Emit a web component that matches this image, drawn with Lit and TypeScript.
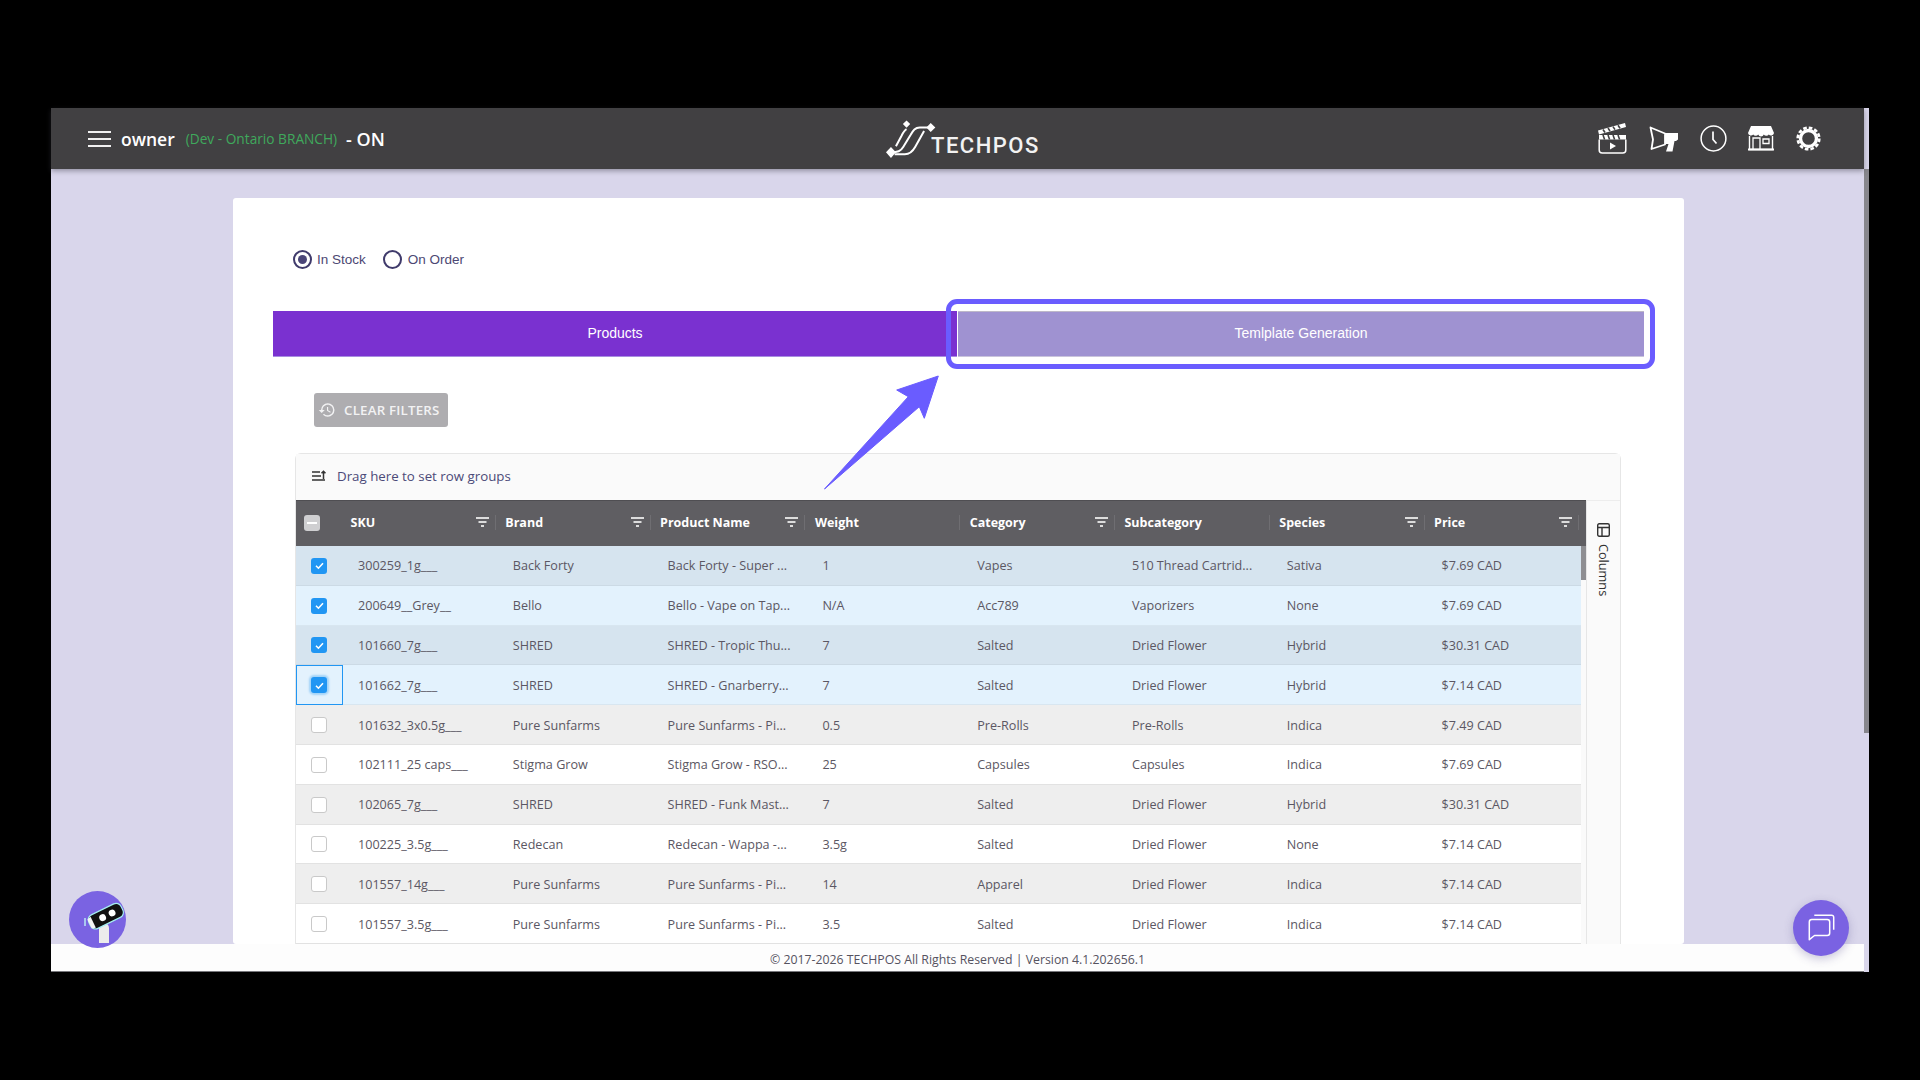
import { LitElement, html, css, svg } from "lit";
import { customElement } from "lit/decorators.js";
import { classMap } from "lit/directives/class-map.js";

const columns = [
  { label: "SKU", filter: true },
  { label: "Brand", filter: true },
  { label: "Product Name", filter: true },
  { label: "Weight", filter: false },
  { label: "Category", filter: true },
  { label: "Subcategory", filter: false },
  { label: "Species", filter: true },
  { label: "Price", filter: true },
];

const rows = [
  ["300259_1g___", "Back Forty", "Back Forty - Super ...", "1", "Vapes", "510 Thread Cartrid...", "Sativa", "$7.69 CAD"],
  ["200649__Grey__", "Bello", "Bello - Vape on Tap...", "N/A", "Acc789", "Vaporizers", "None", "$7.69 CAD"],
  ["101660_7g___", "SHRED", "SHRED - Tropic Thu...", "7", "Salted", "Dried Flower", "Hybrid", "$30.31 CAD"],
  ["101662_7g___", "SHRED", "SHRED - Gnarberry...", "7", "Salted", "Dried Flower", "Hybrid", "$7.14 CAD"],
  ["101632_3x0.5g___", "Pure Sunfarms", "Pure Sunfarms - Pi...", "0.5", "Pre-Rolls", "Pre-Rolls", "Indica", "$7.49 CAD"],
  ["102111_25 caps___", "Stigma Grow", "Stigma Grow - RSO...", "25", "Capsules", "Capsules", "Indica", "$7.69 CAD"],
  ["102065_7g___", "SHRED", "SHRED - Funk Mast...", "7", "Salted", "Dried Flower", "Hybrid", "$30.31 CAD"],
  ["100225_3.5g___", "Redecan", "Redecan - Wappa -...", "3.5g", "Salted", "Dried Flower", "None", "$7.14 CAD"],
  ["101557_14g___", "Pure Sunfarms", "Pure Sunfarms - Pi...", "14", "Apparel", "Dried Flower", "Indica", "$7.14 CAD"],
  ["101557_3.5g___", "Pure Sunfarms", "Pure Sunfarms - Pi...", "3.5", "Salted", "Dried Flower", "Indica", "$7.14 CAD"],
];

const filterIcon = svg`<svg class="filter" width="13" height="10" viewBox="0 0 13 10">
  <path d="M0 1h13M2.5 5h8M5 9h3" stroke="#dcdcdc" stroke-width="2" fill="none"/></svg>`;

const logo = svg`<svg class="logo-mark" width="53" height="40" viewBox="75 40 160 120" fill="none" stroke="#fff" stroke-width="6">
  <path d="M213 65H180C166 65 160 74 152 88L130 124C122 137 114 140 93 140"/>
  <path d="M140 70C134 73 130 80 125 90L108 122"/>
  <path d="M193 76L166 124C158 138 150 146 135 146H104"/>
  <path fill="#fff" stroke="none" d="M140 44l11 11-11 11-11-11zM213 52l14 13-14 14-13-14zM93 124l15 16-15 17-15-17z"/>
</svg>`;

const clapper = svg`<svg width="29" height="31" viewBox="0 0 29 31" fill="none">
  <path d="M0 7.5L27 0l1 4L1 11.5z" fill="#fff"/>
  <path d="M5 6.5l2 3M10 5l2 3M15 3.6l2 3M20 2.2l2 3" stroke="#414042" stroke-width="1.6"/>
  <path d="M1 12h27v4.5H1z" fill="#fff"/>
  <path d="M5 12l1.6 4.5M10 12l1.6 4.5M15 12l1.6 4.5M20 12l1.6 4.5" stroke="#414042" stroke-width="1.6"/>
  <path d="M1.2 16.5V27a3 3 0 0 0 3 3h20.600a3 3 0 0 0 3-3V16.500" stroke="#fff" stroke-width="1.500"/>
  <path d="M12 19.500l6 3.500-6 3.500z" fill="#fff"/>
</svg>`;

const megaphone = svg`<svg width="30" height="26" viewBox="0 0 30 26" fill="none">
  <path d="M2.500 1.500L17 7.500v11L3.500 23 5 13.500z" stroke="#fff" stroke-width="1.800" stroke-linejoin="round"/>
  <path d="M17 7h13v6.500l-2 1.500-1.500 0-2 10.500h-6.500l2.500-7.500H17z" fill="#fff"/>
</svg>`;

const clock = svg`<svg width="27" height="27" viewBox="0 0 27 27" fill="none" stroke="#fff">
  <circle cx="13.500" cy="13.500" r="12.400" stroke-width="1.500"/>
  <path d="M13 6.500v8l3.500 4" stroke-width="1.700"/>
</svg>`;

const store = svg`<svg width="26" height="25" viewBox="0 0 26 25" fill="none">
  <path d="M3 0h20l3 7a3 3 0 0 1-5.200 1.500 3 3 0 0 1-5 0 3 3 0 0 1-5.600 0 3 3 0 0 1-5 0A3 3 0 0 1 0 7z" fill="#fff"/>
  <path d="M1.500 10v13.500h23V10" stroke="#fff" stroke-width="1.400"/>
  <path d="M5 23V12h7v11M15 13h6v4.500h-6z" stroke="#fff" stroke-width="1.300"/>
  <path d="M0 23.500h26" stroke="#fff" stroke-width="2"/>
</svg>`;

const gear = svg`<svg width="25" height="25" viewBox="0 0 25 25" fill="none" stroke="#fff">
  <circle cx="12.500" cy="12.500" r="8" stroke-width="3.400"/>
  <circle cx="12.500" cy="12.500" r="10.800" stroke-width="2.600" stroke-dasharray="3.600 2.050"/>
</svg>`;

const history = svg`<svg width="18" height="18" viewBox="0 0 24 24" fill="#f2f2f3">
  <path d="M13 3a9 9 0 0 0-9 9H1l3.890 3.890.07.140L9 12H6c0-3.870 3.130-7 7-7s7 3.130 7 7-3.130 7-7 7c-1.930 0-3.680-.790-4.940-2.060l-1.420 1.420A8.954 8.954 0 0 0 13 21a9 9 0 0 0 0-18zm-1 5v5l4.280 2.540.720-1.210-3.500-2.080V8H12z"/>
</svg>`;

const groupIcon = svg`<svg width="14" height="12" viewBox="0 0 14 12" fill="none" stroke="#333" stroke-width="1.500">
  <path d="M0 2h8M0 6h9M0 10h13M11.500 9V1.500M9.500 3.200l2-2 2 2"/>
</svg>`;

const columnsIcon = svg`<svg width="13" height="14" viewBox="0 0 13 14" fill="none" stroke="#333" stroke-width="1.400">
  <rect x="0.700" y="0.700" width="11.600" height="12.600" rx="1.500"/>
  <path d="M1 4.500h11M5 4.500v9"/>
</svg>`;

const botIcon = svg`<svg width="57" height="57" viewBox="0 0 57 57">
  <circle cx="28.500" cy="28.500" r="28.500" fill="#7a63e2"/>
  <path d="M30 52V37a5 5 0 0 1 10 0v15z" fill="#ececec"/>
  <path d="M16 27v8" stroke="#bdf3f5" stroke-width="1.400"/>
  <g transform="rotate(-26 35 26)">
    <rect x="19" y="18.500" width="36" height="15" rx="5.500" fill="#111" stroke="#a5eef2" stroke-width="1.200"/>
    <circle cx="33.500" cy="26" r="3.400" fill="#fff"/>
    <circle cx="44" cy="26" r="3.400" fill="#fff"/>
    <path d="M19 21l4-1v12l-4-1z" fill="#f4f4f4"/>
  </g>
</svg>`;

const chatIcon = svg`<svg width="56" height="56" viewBox="0 0 56 56" fill="none" stroke="#fff" stroke-width="1.500">
  <path d="M21.300 15.300H38.700a2 2 0 0 1 2 2V29.700"/>
  <path d="M16.300 22a2.500 2.500 0 0 1 2.500-2.500H34.200a2.500 2.500 0 0 1 2.500 2.500V33a2.500 2.500 0 0 1-2.500 2.500H21.500L16.300 39.700z" stroke-linejoin="round"/>
</svg>`;

@customElement("app-root")
export class AppRoot extends LitElement {
  static styles = css`
    :host {
      display: block;
      position: relative;
      width: 1920px;
      height: 1080px;
      box-sizing: border-box;
      padding: 108px 51px;
      background: #000;
      overflow: hidden;
      font-family: "Open Sans", "Noto Sans", sans-serif;
    }

    .app {
      display: flex;
      width: 1818px;
      height: 864px;
      background: #d9d6eb;
    }

    .page {
      flex: 1;
      min-width: 0;
      display: flex;
      flex-direction: column;
    }

    .window-scroll {
      width: 5px;
      padding-top: 61px;
    }

    .window-thumb {
      height: 564px;
      background: #87868c;
    }

    .topbar {
      position: relative;
      z-index: 2;
      flex: none;
      height: 61px;
      display: grid;
      grid-template-columns: 834px 153px 1fr;
      align-items: center;
      background: #414042;
      box-shadow: 0 2px 5px rgba(60, 60, 70, 0.45);
      color: #fff;
    }

    .user {
      display: flex;
      align-items: center;
      padding-left: 37px;
    }

    .burger {
      width: 23px;
      height: 16px;
      margin-right: 10px;
      border-top: 2px solid #f0f0f0;
      border-bottom: 2px solid #f0f0f0;
      box-sizing: border-box;
      position: relative;
    }

    .burger::after {
      content: "";
      position: absolute;
      left: 0;
      right: 0;
      top: 5px;
      height: 2px;
      background: #f0f0f0;
    }

    .owner {
      font-size: 17.500px;
      font-weight: 600;
      margin-right: 11px;
    }

    .branch {
      font-size: 13.700px;
      color: #3fa95c;
      margin-right: 9px;
    }

    .status {
      font-size: 18px;
      font-weight: 600;
    }

    .logo {
      display: flex;
      align-items: flex-end;
      height: 40px;
    }

    .logo-mark {
      flex: none;
    }

    .logo-text {
      margin-left: -7px;
      font-family: Roboto, sans-serif;
      font-size: 22px;
      font-weight: 500;
      line-height: 26px;
      letter-spacing: 1.500px;
      color: #f2f2f2;
    }

    .tools {
      display: flex;
      align-items: center;
      justify-content: flex-end;
      padding-right: 43.500px;
      gap: 21.400px;
    }

    .tools svg {
      display: block;
    }

    .content {
      flex: 1;
      min-height: 0;
      overflow: hidden;
      padding: 29px 0 0 182px;
    }

    .card {
      width: 1451px;
      box-sizing: border-box;
      padding: 51px 0 0 40px;
      background: #fff;
      border-radius: 3px;
    }

    .stock {
      display: flex;
      align-items: center;
      height: 20px;
      margin-left: 20px;
      font-family: "Liberation Sans", Arial, sans-serif;
      font-size: 13.500px;
      color: #4c4873;
    }

    .radio {
      width: 19px;
      height: 19px;
      box-sizing: border-box;
      border: 2px solid #3f3a6b;
      border-radius: 50%;
      margin-right: 5px;
      background: #fff;
    }

    .radio.on {
      padding: 3px;
    }

    .radio.on::before {
      content: "";
      display: block;
      width: 100%;
      height: 100%;
      border-radius: 50%;
      background: #4a4578;
    }

    .radio.off {
      margin-right: 6px;
    }

    .stock-label {
      margin-right: 17px;
    }

    .tabs {
      position: relative;
      display: flex;
      width: 1371px;
      height: 46px;
      margin-top: 42px;
      font-family: "Liberation Sans", Arial, sans-serif;
      font-size: 14px;
      color: #fff;
    }

    .tab {
      display: flex;
      align-items: center;
      justify-content: center;
      box-sizing: border-box;
      padding-bottom: 1px;
    }

    .tab.active {
      width: 684px;
      background: #7a31d0;
      border-bottom: 1px solid #a78de0;
    }

    .tab.idle {
      flex: 1;
      margin-left: 1px;
      padding-bottom: 2px;
      background: #9f92d1;
      border-top: 1px solid #bdb8c8;
      border-bottom: 1px solid #c9c4dc;
    }

    .callout {
      position: absolute;
      left: 673px;
      top: -12px;
      width: 709px;
      height: 70px;
      box-sizing: border-box;
      border: 5px solid #6a5cff;
      border-radius: 11px;
    }

    .clear {
      display: flex;
      align-items: center;
      width: 134px;
      height: 34px;
      box-sizing: border-box;
      margin: 36px 0 0 41px;
      padding: 0 0 1px 4px;
      gap: 8px;
      border-radius: 3px;
      background: #aeadb0;
      color: #f2f2f3;
      font-size: 13.300px;
      font-weight: 600;
      letter-spacing: 0.2px;
    }

    .grid {
      display: flex;
      flex-direction: column;
      width: 1326px;
      box-sizing: border-box;
      margin: 26px 0 0 22px;
      border: 1px solid #e6e6e6;
      border-bottom: none;
      border-radius: 6px 6px 0 0;
    }

    .drop-zone {
      display: flex;
      align-items: center;
      height: 46px;
      box-sizing: border-box;
      padding: 0 0 2px 16px;
      gap: 11px;
      background: #fafafa;
      font-size: 13.300px;
      color: #4c4a78;
    }

    .grid-body {
      display: flex;
    }

    .table {
      width: 1290px;
      flex: none;
    }

    .head {
      display: grid;
      grid-template-columns: 47px repeat(8, 154.800px);
      height: 46px;
      box-sizing: border-box;
      align-items: center;
      background: #5f5e62;
      border-top: 1px solid #4f4e52;
      color: #fff;
      font-size: 12.500px;
      font-weight: 700;
    }

    .head-check {
      width: 16px;
      height: 16px;
      margin: -1px 0 0 8px;
      border-radius: 3px;
      background: #cfcfd1;
      position: relative;
    }

    .head-check::after {
      content: "";
      position: absolute;
      left: 3px;
      right: 3px;
      top: 7px;
      height: 2px;
      background: #fff;
    }

    .head-cell {
      display: flex;
      align-items: center;
      height: 100%;
      box-sizing: border-box;
      padding: 0 0 2px 7.500px;
      position: relative;
    }

    .head-cell::after {
      content: "";
      position: absolute;
      right: 2px;
      top: 14px;
      height: 15px;
      width: 1px;
      background: #6f6e72;
    }

    .filter {
      position: absolute;
      right: 9px;
      top: 16px;
    }

    .table-rows {
      display: flex;
    }

    .rows {
      width: 1285px;
      flex: none;
      overflow: hidden;
    }

    .row {
      display: grid;
      grid-template-columns: 47px repeat(8, 154.800px);
      height: 39.800px;
      box-sizing: border-box;
      padding-top: 1px;
      align-items: center;
      background: #fff;
      border-bottom: 1px solid #e2e2e2;
      font-size: 12.600px;
      color: #5b5763;
    }

    .row.odd {
      background: #eeeeee;
    }

    .row.picked {
      background: #e3f2fd;
      border-bottom-color: #d8e6f0;
    }

    .row.picked.odd {
      background: #d6e4ef;
      border-bottom-color: #ccdae5;
    }

    .select {
      align-self: stretch;
      display: flex;
      align-items: center;
      justify-content: center;
      padding-right: 1px;
      box-sizing: border-box;
    }

    .select.focus {
      border: 1px solid #2196f3;
      margin: -1px 0 -1px 0;
    }

    .box {
      display: flex;
      align-items: center;
      justify-content: center;
      width: 16px;
      height: 16px;
      box-sizing: border-box;
      border-radius: 3px;
      border: 1px solid #c9c9c9;
      background: #fff;
    }

    .box.on {
      border: none;
      background: #2196f3;
    }

    .select.focus .box {
      box-shadow: 0 0 2px 2px #a2d3f8;
    }

    .cell {
      padding-left: 15px;
      white-space: nowrap;
    }

    .track {
      width: 5px;
      flex: none;
      background: #fafafa;
    }

    .track-thumb {
      height: 34px;
      background: #8e8e92;
    }

    .side {
      flex: 1;
      display: flex;
      flex-direction: column;
      align-items: center;
      padding-top: 22px;
      gap: 7px;
      background: #fafafa;
      border-left: 1px solid #e6e6e6;
      border-top: 1px solid #ededed;
      box-sizing: border-box;
      color: #333;
      font-size: 12.700px;
    }

    .side-label {
      writing-mode: vertical-rl;
      line-height: 16px;
    }

    .footer {
      position: relative;
      z-index: 1;
      flex: none;
      height: 28px;
      box-sizing: border-box;
      display: flex;
      align-items: center;
      justify-content: center;
      padding-top: 3px;
      background: #fdfdfd;
      border-bottom: 1px solid #77777b;
      font-size: 12.300px;
      color: #55525f;
    }

    .arrow {
      position: absolute;
      left: 820px;
      top: 372px;
      z-index: 3;
    }

    .bot {
      position: absolute;
      z-index: 3;
      left: 69px;
      top: 891px;
      width: 57px;
      height: 57px;
    }

    .chat {
      position: absolute;
      z-index: 3;
      left: 1793px;
      top: 900px;
      width: 56px;
      height: 56px;
      border-radius: 50%;
      background: #7a62e2;
      box-shadow: 0 3px 10px rgba(80, 70, 140, 0.3);
    }

    .bot svg,
    .chat svg {
      display: block;
    }
  `;

  render() {
    return html`
      <div class="app">
        <div class="page">
          <header class="topbar">
            <div class="user">
              <div class="burger"></div>
              <span class="owner">owner</span>
              <span class="branch">(Dev - Ontario BRANCH)</span>
              <span class="status">- ON</span>
            </div>
            <div class="logo">${logo}<span class="logo-text">TECHPOS</span></div>
            <div class="tools">${clapper}${megaphone}${clock}${store}${gear}</div>
          </header>
          <main class="content">
            <section class="card">
              <div class="stock">
                <span class="radio on"></span><span class="stock-label">In Stock</span>
                <span class="radio off"></span><span>On Order</span>
              </div>
              <div class="tabs">
                <div class="tab active">Products</div>
                <div class="tab idle">Temlplate Generation</div>
                <div class="callout"></div>
              </div>
              <div class="clear">${history}<span>CLEAR FILTERS</span></div>
              <div class="grid">
                <div class="drop-zone">${groupIcon}<span>Drag here to set row groups</span></div>
                <div class="grid-body">
                  <div class="table">
                    <div class="head">
                      <div class="head-check"></div>
                      ${columns.map((c) => html`<div class="head-cell">${c.label}${c.filter ? filterIcon : ""}</div>`)}
                    </div>
                    <div class="table-rows">
                      <div class="rows">${rows.map((r, i) => this.renderRow(r, i))}</div>
                      <div class="track"><div class="track-thumb"></div></div>
                    </div>
                  </div>
                  <aside class="side">${columnsIcon}<span class="side-label">Columns</span></aside>
                </div>
              </div>
            </section>
          </main>
          <footer class="footer">© 2017-2026 TECHPOS All Rights Reserved | Version 4.1.202656.1</footer>
        </div>
        <div class="window-scroll"><div class="window-thumb"></div></div>
      </div>

      <svg class="arrow" width="124" height="122" viewBox="820 372 124 122">
        <path d="M824.500 489L908.300 396.700 896.700 390 938.300 376 924.300 418.300 919.300 406.700z"
          fill="#6a5cff" stroke="#6a5cff" stroke-width="1" stroke-linejoin="round"/>
      </svg>
      <div class="bot">${botIcon}</div>
      <div class="chat">${chatIcon}</div>
    `;
  }

  renderRow(row: string[], i: number) {
    const picked = i < 4;
    return html`
      <div class=${classMap({ row: true, odd: i % 2 === 0, picked })}>
        <div class=${classMap({ select: true, focus: i === 3 })}>
          <div class=${classMap({ box: true, on: picked })}>
            ${picked
              ? svg`<svg width="11" height="11" viewBox="0 0 11 11"><path d="M2 5.800l2.400 2.400L9 3.200" fill="none" stroke="#fff" stroke-width="1.600"/></svg>`
              : ""}
          </div>
        </div>
        ${row.map((c) => html`<div class="cell">${c}</div>`)}
      </div>
    `;
  }
}
